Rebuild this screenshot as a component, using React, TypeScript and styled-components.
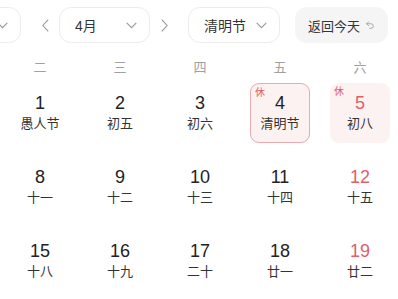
import React from "react";
import styled, { createGlobalStyle } from "styled-components";
import { Undo2 } from "lucide-react";

const Global = createGlobalStyle`
  html, body { margin: 0; padding: 0; background: #fff; overflow: hidden; }
  body { font-family: "Liberation Sans", "Noto Sans CJK SC", sans-serif; color: #333; }
`;

const Page = styled.div`
  width: 400px;
`;

const Header = styled.div`
  display: flex;
  align-items: center;
  padding-top: 7px;
  margin-left: -69px;
  gap: 12px;
`;

const Select = styled.div<{ $w: number }>`
  box-sizing: border-box;
  flex: none;
  width: ${(p) => p.$w}px;
  height: 36px;
  border: 1px solid #ececec;
  border-radius: 12px;
  display: flex;
  align-items: center;
  justify-content: space-between;
  padding: 0 12px 0 15px;
  font-size: 14px;
  color: #333;
`;

const MonthGroup = styled.div`
  display: flex;
  align-items: center;
  gap: 2px;
`;

const ArrowBtn = styled.div`
  width: 24px;
  height: 36px;
  display: flex;
  align-items: center;
  justify-content: center;
`;

const ReturnBtn = styled.div`
  box-sizing: border-box;
  flex: none;
  margin-left: 3px;
  width: 93px;
  height: 36px;
  border-radius: 12px;
  background: #f5f5f5;
  display: flex;
  align-items: center;
  padding: 0 0 0 13px;
  gap: 5px;
  font-size: 13px;
  color: #333;
`;

const Chevron = ({ dir }: { dir: "down" | "left" | "right" }) => {
  if (dir === "down")
    return (
      <svg width="11" height="7" viewBox="0 0 11 7">
        <path d="M0.7 0.8 L5.5 5.6 L10.3 0.8" fill="none" stroke="#999" strokeWidth="1.1" />
      </svg>
    );
  return (
    <svg width="7" height="13" viewBox="0 0 7 13">
      <path
        d={dir === "left" ? "M6.2 0.7 L0.9 6.5 L6.2 12.3" : "M0.8 0.7 L6.1 6.5 L0.8 12.3"}
        fill="none"
        stroke="#999"
        strokeWidth="1.1"
      />
    </svg>
  );
};

const Grid = styled.div`
  display: grid;
  grid-template-columns: repeat(5, 80px);
`;

const WeekRow = styled(Grid)`
  margin-top: 8px;
  height: 30px;
  align-items: center;
  justify-items: center;
`;

const WeekName = styled.div`
  font-size: 13px;
  color: #a0a0a0;
`;

const DayGrid = styled(Grid)`
  margin-top: 2px;
  row-gap: 14px;
  justify-items: center;
`;

const DayCell = styled.div<{ $kind: "normal" | "selected" | "rest" }>`
  position: relative;
  box-sizing: border-box;
  width: 60px;
  height: 60px;
  border-radius: 9px;
  display: flex;
  flex-direction: column;
  align-items: center;
  justify-content: center;
  background: ${(p) => (p.$kind === "normal" ? "transparent" : "#fdf2f2")};
  border: ${(p) => (p.$kind === "selected" ? "1.5px solid #e8a9b0" : "none")};
`;

const DayNum = styled.div<{ $red: boolean }>`
  font-size: 18px;
  line-height: 20px;
  color: ${(p) => (p.$red ? "#e0606a" : "#222")};
`;

const Lunar = styled.div`
  margin-top: 2px;
  font-size: 13px;
  line-height: 18px;
  color: #333;
`;

const RestTag = styled.span`
  position: absolute;
  top: 3px;
  left: 4px;
  font-size: 10px;
  line-height: 12px;
  color: #e0606a;
`;

type Day = { n: number; l: string; rest?: boolean; sel?: boolean };

const weeks: Day[][] = [
  [
    { n: 1, l: "愚人节" },
    { n: 2, l: "初五" },
    { n: 3, l: "初六" },
    { n: 4, l: "清明节", rest: true, sel: true },
    { n: 5, l: "初八", rest: true },
  ],
  [
    { n: 8, l: "十一" },
    { n: 9, l: "十二" },
    { n: 10, l: "十三" },
    { n: 11, l: "十四" },
    { n: 12, l: "十五" },
  ],
  [
    { n: 15, l: "十八" },
    { n: 16, l: "十九" },
    { n: 17, l: "二十" },
    { n: 18, l: "廿一" },
    { n: 19, l: "廿二" },
  ],
];

const names = ["二", "三", "四", "五", "六"];

export default function App() {
  return (
    <Page>
      <Global />
      <Header>
        <Select $w={90}>
          <span />
          <Chevron dir="down" />
        </Select>
        <MonthGroup>
          <ArrowBtn>
            <Chevron dir="left" />
          </ArrowBtn>
          <Select $w={91}>
            <span>4月</span>
            <Chevron dir="down" />
          </Select>
          <ArrowBtn>
            <Chevron dir="right" />
          </ArrowBtn>
        </MonthGroup>
        <Select $w={92}>
          <span>清明节</span>
          <Chevron dir="down" />
        </Select>
        <ReturnBtn>
          <span>返回今天</span>
          <Undo2 size={10} strokeWidth={1.6} color="#888" />
        </ReturnBtn>
      </Header>
      <WeekRow>
        {names.map((n) => (
          <WeekName key={n}>{n}</WeekName>
        ))}
      </WeekRow>
      <DayGrid>
        {weeks.flat().map((d, i) => (
          <DayCell key={i} $kind={d.sel ? "selected" : d.rest ? "rest" : "normal"}>
            {d.rest && <RestTag>休</RestTag>}
            <DayNum $red={i % 5 === 4}>{d.n}</DayNum>
            <Lunar>{d.l}</Lunar>
          </DayCell>
        ))}
      </DayGrid>
    </Page>
  );
}
